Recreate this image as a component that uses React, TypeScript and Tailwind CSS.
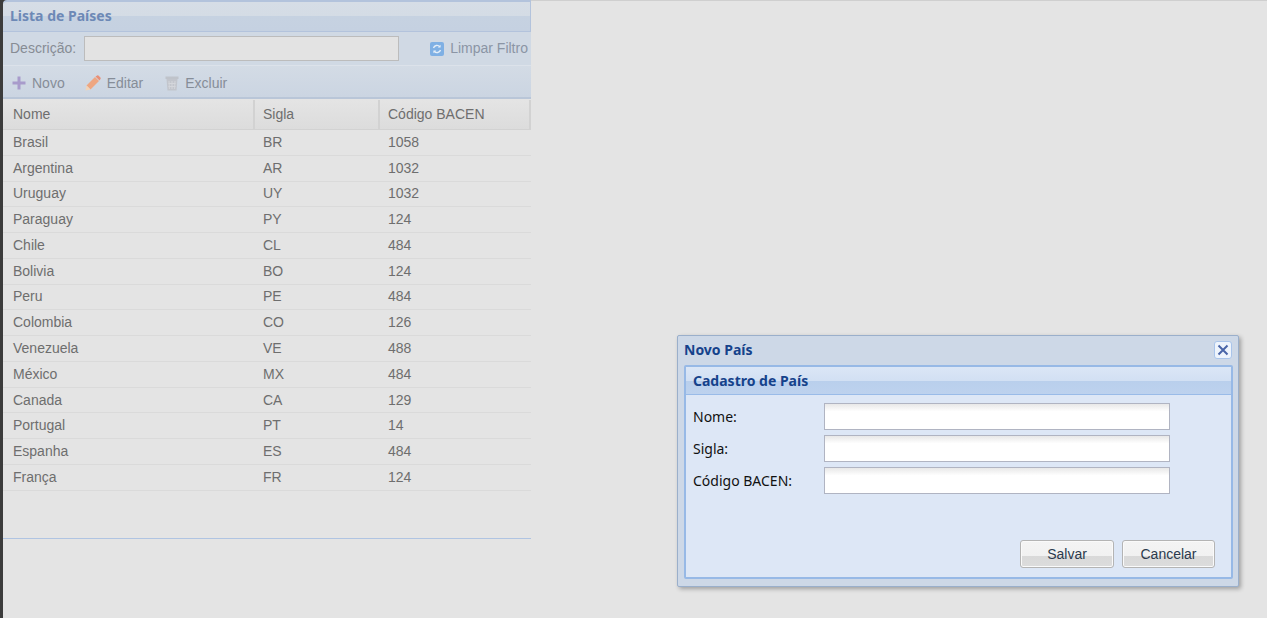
const paises = [
  ["Brasil", "BR", "1058"],
  ["Argentina", "AR", "1032"],
  ["Uruguay", "UY", "1032"],
  ["Paraguay", "PY", "124"],
  ["Chile", "CL", "484"],
  ["Bolivia", "BO", "124"],
  ["Peru", "PE", "484"],
  ["Colombia", "CO", "126"],
  ["Venezuela", "VE", "488"],
  ["México", "MX", "484"],
  ["Canada", "CA", "129"],
  ["Portugal", "PT", "14"],
  ["Espanha", "ES", "484"],
  ["França", "FR", "124"],
];

const campos = ["Nome:", "Sigla:", "Código BACEN:"];

function DialogButton({ label, className }: { label: string; className: string }) {
  return (
    <button className={`h-[28px] rounded-[3px] border border-[#b4b4b4] bg-[linear-gradient(#f4f4f4_0%,#f1f1f1_57%,#d9d9d9_57%,#dcdcdc_100%)] text-[14px] text-[#2b3a4d] shadow-[inset_0_0_0_1px_#fafafa] ${className}`}>
      {label}
    </button>
  );
}

export default function App() {
  return (
    <div className="relative flex h-[618px] w-[1267px] overflow-hidden bg-[#e4e4e4] font-['Liberation_Sans',sans-serif] text-[14px] text-[#6e6e6e]">
      <div className="w-[3px] shrink-0 bg-[#3c3c3c]" />

      <div className="w-[528px] shrink-0">
        <div className="bg-[#3c3c3c]">
          <div className="h-[32px] rounded-tl-[4px] border border-t-2 border-l-0 border-[#b3c3dc] bg-[linear-gradient(#d6dde6_0%,#d4dce5_48%,#c6d2e1_48%,#c5d1e1_100%)] pl-[7px] font-['Noto_Sans',sans-serif] text-[14px] leading-[27px] font-bold text-[#6d89b6]">
            Lista de Países
          </div>
        </div>

        <div className="flex h-[34px] items-center border-b border-[#dce2ea] bg-[#d0d9e4] pl-[7px] whitespace-nowrap">
          <span className="text-[#878c94]">Descrição:</span>
          <div className="ml-[8px] h-[25px] w-[315px] shrink-0 border border-[#bcbcbc] bg-[#e3e3e3]" />
          <svg className="ml-[31px] h-[14px] w-[14px] shrink-0" viewBox="0 0 14 14">
            <rect width="14" height="14" rx="2" fill="#7fb0e4" />
            <path d="M3.5 6a3.6 3.6 0 0 1 6.3-1.2M10.5 8a3.6 3.6 0 0 1-6.3 1.2" fill="none" stroke="#e4eef8" strokeWidth="1.4" />
            <path d="M10.6 2.8v2.8H7.8zM3.4 11.2V8.4h2.8z" fill="#e4eef8" />
          </svg>
          <span className="ml-[6px] text-[#8b95a5]">Limpar Filtro</span>
        </div>

        <div className="flex h-[33px] items-center border-b-2 border-[#b9c6d8] bg-[linear-gradient(#d3dbe5,#cbd5e2)] pt-[3px] pl-[9px] text-[#868d98]">
          <span className="flex items-center gap-[6px]">
            <svg className="h-[14px] w-[14px]" viewBox="0 0 14 14">
              <path d="M5.5 0.5h3v5h5v3h-5v5h-3v-5h-5v-3h5z" fill="#a89bcb" />
            </svg>
            Novo
          </span>
          <span className="ml-[20px] flex items-center gap-[6px]">
            <svg className="h-[16px] w-[16px]" viewBox="0 0 16 16">
              <path d="M1.500 10.500L10 2l4 4-8.500 8.500z" fill="#eea681" />
              <path d="M10.500 1.500l1.600-1a1 1 0 0 1 1.300 0.100l2 2a1 1 0 0 1 0.100 1.300l-1 1.600z" fill="#e98f77" />
              <path d="M0.500 15.500l1-5 4 4z" fill="#f2d3b8" />
            </svg>
            Editar
          </span>
          <span className="ml-[22px] flex items-center gap-[6px]">
            <svg className="h-[15px] w-[14px]" viewBox="0 0 14 15">
              <path d="M0.500 0.500h13v2.500h-13z" fill="#bfc3ca" />
              <path d="M1.500 3h11l-1 11.500h-9z" fill="#c2c5cc" />
              <path d="M4 5l0.400 8M7 5v8M10 5l-0.400 8M3.500 7.500h7M3.500 10.500h7" stroke="#d4d6db" strokeWidth="1" />
            </svg>
            Excluir
          </span>
        </div>

        <div className="flex h-[31px] border-y border-t-[#e4e4e4] border-b-[#d2d2d2] bg-[linear-gradient(#e4e4e4,#dcdcdc)] leading-[29px]">
          <div className="w-[252px] border-r-2 border-[#d2d2d2] pl-[10px]">Nome</div>
          <div className="w-[125px] border-r-2 border-[#d2d2d2] pl-[8px]">Sigla</div>
          <div className="flex-1 border-r-2 border-[#d2d2d2] pl-[8px]">Código BACEN</div>
        </div>

        <div className="h-[409px] border-b border-[#b0c4e2]">
          {paises.map(([nome, sigla, codigo]) => (
            <div key={sigla} className="flex h-[25.77px] items-center border-b border-[#dadada]">
              <div className="w-[252px] pl-[10px]">{nome}</div>
              <div className="w-[125px] pl-[8px]">{sigla}</div>
              <div className="flex-1 pl-[8px]">{codigo}</div>
            </div>
          ))}
        </div>
      </div>

      <div className="flex-1 border-t border-[#cfcfcf]" />

      <div className="absolute top-[335px] left-[677px] flex h-[252px] w-[562px] flex-col rounded-[2px] border border-[#9aafcb] bg-[#cdd8e7] pr-[5px] pb-[7px] pl-[6px] shadow-[2px_2px_4px_rgba(0,0,0,0.3)]">
        <div className="flex h-[29px] shrink-0 items-center justify-between font-['Noto_Sans',sans-serif] text-[14px] font-bold text-[#15428b]">
          <span className="mb-[2px]">Novo País</span>
          <div className="mr-[1px] mb-[1px] flex h-[18px] w-[18px] items-center justify-center rounded-[3px] border border-[#a9c4ea] bg-[#eef4fc]">
            <svg className="h-[12px] w-[12px]" viewBox="0 0 12 12">
              <path d="M1.500 1.500l9 9M10.500 1.500l-9 9" stroke="#4a65a8" strokeWidth="2" />
            </svg>
          </div>
        </div>

        <div className="flex flex-1 flex-col rounded-[2px] border-2 border-[#97b9e6] bg-[#dde7f6]">
          <div className="h-[28px] shrink-0 rounded-t-[2px] border-b border-[#99bbe8] bg-[linear-gradient(#dbe6f6_0%,#d2e0f3_50%,#b9cfec_50%,#bdd2ee_100%)] pl-[7px] font-['Noto_Sans',sans-serif] text-[14px] leading-[28px] font-bold text-[#15428b]">
            Cadastro de País
          </div>
          <div className="flex flex-1 flex-col px-[7px] pt-[8px]">
            <div className="flex flex-col gap-[5px]">
              {campos.map((campo) => (
                <div key={campo} className="flex h-[27px] items-center">
                  <span className="w-[131px] font-['Noto_Sans',sans-serif] text-[14px] text-[#111111]">{campo}</span>
                  <div className="h-[27px] w-[346px] border border-[#b0b4c2] bg-[linear-gradient(#e8e8e8_0%,#ffffff_30%)]" />
                </div>
              ))}
            </div>
            <div className="mt-[46px] flex justify-end gap-[8px] pr-[9px]">
              <DialogButton label="Salvar" className="w-[94px]" />
              <DialogButton label="Cancelar" className="w-[93px]" />
            </div>
          </div>
        </div>
      </div>
    </div>
  );
}
